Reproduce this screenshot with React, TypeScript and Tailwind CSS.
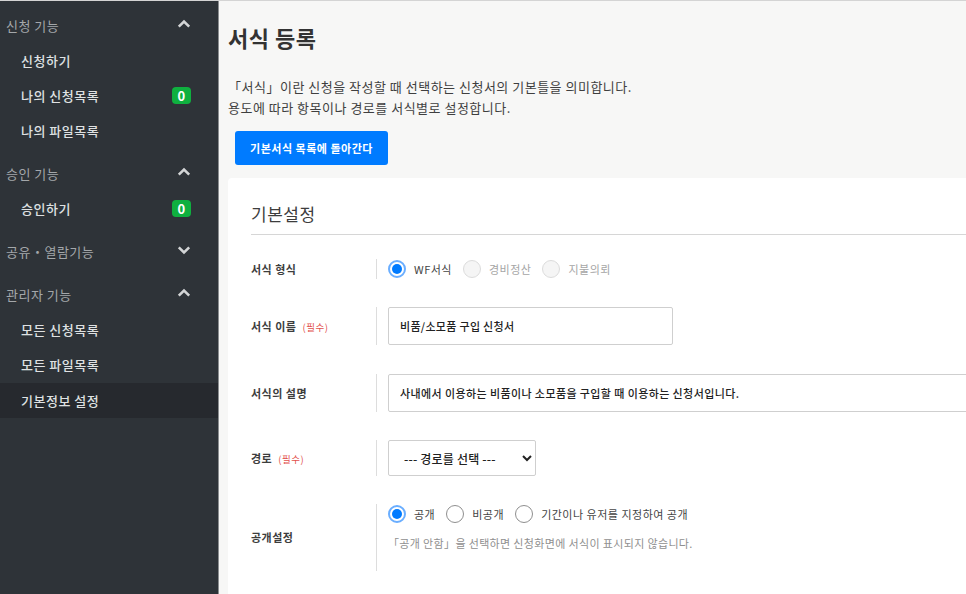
import React from "react";

const font = { fontFamily: '"Noto Sans CJK KR", "Noto Sans", sans-serif' };

const Chevron = ({ up }: { up: boolean }) => (
  <svg width="14" height="10" viewBox="0 0 14 10" fill="none" className="mt-[-4px]">
    <path
      d={up ? "M1.8 7.6 7 2.6l5.2 5" : "M1.8 2.4 7 7.4l5.2-5"}
      stroke="#d3d5d6"
      strokeWidth="2.6"
    />
  </svg>
);

const MenuItem = ({ label, badge, active }: { label: string; badge?: string; active?: boolean }) => (
  <div className={`flex h-[35px] items-center justify-between pl-[21px] pr-[27px] text-[13px] font-medium text-[#dfe1e2] ${active ? "mt-[1px] bg-[#26292e]" : ""}`}>
    <span>{label}</span>
    {badge && (
      <span className="flex h-[17px] w-[19px] items-center justify-center rounded-[4px] bg-[#0fb03f] text-[13px] font-bold leading-none text-white">
        {badge}
      </span>
    )}
  </div>
);

const MenuHead = ({ label, up }: { label: string; up: boolean }) => (
  <div className="flex h-[35px] items-center justify-between pl-[6px] pr-[27px] text-[13px] text-[#a3a7aa]">
    <span>{label}</span>
    <Chevron up={up} />
  </div>
);

const Radio = ({ label, state }: { label: string; state: "on" | "off" | "disabled" }) => (
  <label className="flex items-center gap-[8px]">
    {state === "on" && (
      <span className="flex h-[18px] w-[18px] items-center justify-center rounded-full border-[2px] border-[#6aaeff] bg-white">
        <span className="h-[10px] w-[10px] rounded-full bg-[#007bff]" />
      </span>
    )}
    {state === "off" && <span className="h-[18px] w-[18px] rounded-full border-[1.5px] border-[#8f8f8f] bg-white" />}
    {state === "disabled" && <span className="h-[18px] w-[18px] rounded-full border-[1.5px] border-[#dcdcdc] bg-[#f5f5f5]" />}
    <span className={`text-[11px] ${state === "disabled" ? "text-[#a5a5a5]" : "text-[#444444]"}`}>{label}</span>
  </label>
);

const Row = ({
  label,
  required,
  height,
  className,
  children,
}: {
  label: string;
  required?: boolean;
  height: string;
  className: string;
  children: React.ReactNode;
}) => (
  <div className={`flex items-center ${height} ${className}`}>
    <div className="w-[125px] text-[11px] font-bold text-[#3d3d3d]">
      {label}
      {required && <span className="ml-[6px] text-[9.5px] font-normal text-[#e2504c]">(필수)</span>}
    </div>
    <div className="flex h-full flex-1 flex-col border-l border-[#dddddd] pl-[11px]">{children}</div>
  </div>
);

export default function App() {
  return (
    <div className="flex h-[594px] w-[966px] overflow-hidden border-t border-[#d4d4d4] bg-[#f7f7f6] tracking-[0.5px]" style={font}>
      <aside className="h-full w-[219px] shrink-0 border-r border-[#8b8e90] bg-[#2e3338] pt-[7px]">
        <MenuHead label="신청 기능" up />
        <MenuItem label="신청하기" />
        <MenuItem label="나의 신청목록" badge="0" />
        <MenuItem label="나의 파일목록" />
        <div className="mt-[8px]">
          <MenuHead label="승인 기능" up />
        </div>
        <MenuItem label="승인하기" badge="0" />
        <div className="mt-[8px]">
          <MenuHead label="공유・열람기능" up={false} />
        </div>
        <div className="mt-[8px]">
          <MenuHead label="관리자 기능" up />
        </div>
        <MenuItem label="모든 신청목록" />
        <MenuItem label="모든 파일목록" />
        <MenuItem label="기본정보 설정" active />
      </aside>

      <main className="min-w-0 flex-1 pl-[9px]">
        <h1 className="pt-[20px] text-[22px] font-bold leading-[33px] text-[#333333]">서식 등록</h1>
        <p className="mt-[23px] text-[13px] leading-[20.5px] text-[#3f3f3f]">
          「서식」이란 신청을 작성할 때 선택하는 신청서의 기본틀을 의미합니다.
          <br />
          용도에 따라 항목이나 경로를 서식별로 설정합니다.
        </p>
        <button className="ml-[7px] mt-[13px] flex h-[34px] w-[153px] items-center justify-center rounded-[3px] bg-[#007bff] text-[11px] font-bold tracking-[0.5px] text-white">
          기본서식 목록에 돌아간다
        </button>
        <section className="mt-[13px] h-[420px] w-[800px] rounded-l-[4px] bg-white pl-[23px] pt-[23px]">
          <h2 className="border-b border-[#d6d6d6] pb-[8px] text-[17px] leading-[25px] text-[#3d3d3d]">기본설정</h2>

          <Row label="서식 형식" height="h-[20px]" className="mt-[24px]">
            <div className="flex flex-1 items-center gap-[11px]">
              <Radio label="WF서식" state="on" />
              <Radio label="경비정산" state="disabled" />
              <Radio label="지불의뢰" state="disabled" />
            </div>
          </Row>

          <Row label="서식 이름" required height="h-[38px]" className="mt-[28px]">
            <input
              readOnly
              value="비품/소모품 구입 신청서"
              className="h-[38px] w-[285px] rounded-[2px] border border-[#cfcfcf] bg-white px-[11px] text-[11px] font-medium tracking-[0.3px] text-[#222222] outline-none"
            />
          </Row>

          <Row label="서식의 설명" height="h-[38px]" className="mt-[29px]">
            <input
              readOnly
              value="사내에서 이용하는 비품이나 소모품을 구입할 때 이용하는 신청서입니다."
              className="h-[38px] w-[600px] rounded-[2px] border border-[#cfcfcf] bg-white px-[11px] text-[11px] font-medium tracking-[0.4px] text-[#222222] outline-none"
            />
          </Row>

          <Row label="경로" required height="h-[36px]" className="mt-[28px]">
            <select className="h-[36px] w-[148px] rounded-[2px] border border-[#cfcfcf] bg-white px-[11px] text-[12px] font-medium tracking-[0.2px] text-[#222222] outline-none">
              <option>--- 경로를 선택 ---</option>
            </select>
          </Row>

          <Row label="공개설정" height="h-[67px]" className="mt-[28px]">
            <div className="mt-[1px] flex items-center gap-[11px]">
              <Radio label="공개" state="on" />
              <Radio label="비공개" state="off" />
              <Radio label="기간이나 유저를 지정하여 공개" state="off" />
            </div>
            <p className="mt-[12px] text-[11px] tracking-[0.35px] text-[#8f8f8f]">「공개 안함」을 선택하면 신청화면에 서식이 표시되지 않습니다.</p>
          </Row>
        </section>
      </main>
    </div>
  );
}
